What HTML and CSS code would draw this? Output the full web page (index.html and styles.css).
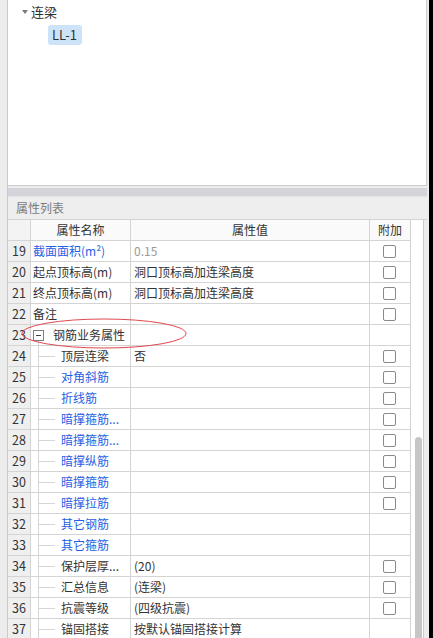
FILE: index.html
```html
<!DOCTYPE html>
<html lang="zh-CN">
<head>
<meta charset="utf-8">
<title>属性列表</title>
<link rel="stylesheet" href="styles.css">
</head>
<body>
<div class="frame">
  <div class="main">
    <div class="tree-panel">
      <div class="tree-row">
        <svg class="caret" width="6" height="4" viewBox="0 0 6 4"><path d="M0 0H6L3 4Z" fill="#7a7a7a"/></svg>
        <span class="tree-label">连梁</span>
      </div>
      <div class="tree-item"><span class="sel">LL-1</span></div>
    </div>
    <div class="props">
      <div class="splitter"></div>
      <div class="props-title">属性列表</div>
      <div class="tbl">
        <div class="grid">
          <div class="row head">
            <div class="c num"></div>
            <div class="c name center">属性名称</div>
            <div class="c val center">属性值</div>
            <div class="c add center">附加</div>
          </div>
          <div class="row"><div class="c num">19</div><div class="c name blue">截面面积(m²)</div><div class="c val gray">0.15</div><div class="c add"><span class="cb"></span></div></div>
          <div class="row"><div class="c num">20</div><div class="c name">起点顶标高(m)</div><div class="c val">洞口顶标高加连梁高度</div><div class="c add"><span class="cb"></span></div></div>
          <div class="row"><div class="c num">21</div><div class="c name">终点顶标高(m)</div><div class="c val">洞口顶标高加连梁高度</div><div class="c add"><span class="cb"></span></div></div>
          <div class="row"><div class="c num">22</div><div class="c name">备注</div><div class="c val"></div><div class="c add"><span class="cb"></span></div></div>
          <div class="row"><div class="c num">23</div><div class="c name group"><span class="minus"></span><span>钢筋业务属性</span></div><div class="c val"></div><div class="c add"></div></div>
          <div class="row"><div class="c num">24</div><div class="c name child">顶层连梁</div><div class="c val">否</div><div class="c add"><span class="cb"></span></div></div>
          <div class="row"><div class="c num">25</div><div class="c name child blue">对角斜筋</div><div class="c val"></div><div class="c add"><span class="cb"></span></div></div>
          <div class="row"><div class="c num">26</div><div class="c name child blue">折线筋</div><div class="c val"></div><div class="c add"><span class="cb"></span></div></div>
          <div class="row"><div class="c num">27</div><div class="c name child blue">暗撑箍筋...</div><div class="c val"></div><div class="c add"><span class="cb"></span></div></div>
          <div class="row"><div class="c num">28</div><div class="c name child blue">暗撑箍筋...</div><div class="c val"></div><div class="c add"><span class="cb"></span></div></div>
          <div class="row"><div class="c num">29</div><div class="c name child blue">暗撑纵筋</div><div class="c val"></div><div class="c add"><span class="cb"></span></div></div>
          <div class="row"><div class="c num">30</div><div class="c name child blue">暗撑箍筋</div><div class="c val"></div><div class="c add"><span class="cb"></span></div></div>
          <div class="row"><div class="c num">31</div><div class="c name child blue">暗撑拉筋</div><div class="c val"></div><div class="c add"><span class="cb"></span></div></div>
          <div class="row"><div class="c num">32</div><div class="c name child blue">其它钢筋</div><div class="c val"></div><div class="c add"></div></div>
          <div class="row"><div class="c num">33</div><div class="c name child blue">其它箍筋</div><div class="c val"></div><div class="c add"></div></div>
          <div class="row"><div class="c num">34</div><div class="c name child">保护层厚...</div><div class="c val">(20)</div><div class="c add"><span class="cb"></span></div></div>
          <div class="row"><div class="c num">35</div><div class="c name child">汇总信息</div><div class="c val">(连梁)</div><div class="c add"><span class="cb"></span></div></div>
          <div class="row"><div class="c num">36</div><div class="c name child">抗震等级</div><div class="c val">(四级抗震)</div><div class="c add"><span class="cb"></span></div></div>
          <div class="row"><div class="c num">37</div><div class="c name child">锚固搭接</div><div class="c val">按默认锚固搭接计算</div><div class="c add"></div></div>
        </div>
        <div class="vscroll"><div class="thumb"></div></div>
      </div>
    </div>
  </div>
  <div class="edge"></div>
</div>
<svg class="mark" width="168" height="34" viewBox="0 0 168 34"><ellipse cx="84" cy="16.5" rx="82" ry="14.5" fill="none" stroke="#e0484e" stroke-width="1"/></svg>
</body>
</html>
```
FILE: styles.css
```css
html, body {
  margin: 0;
  padding: 0;
}
body {
  width: 433px;
  height: 638px;
  overflow: hidden;
  background: #ececec;
  font-family: "Noto Sans CJK SC", "Noto Sans", sans-serif;
  font-size: 12px;
  color: #333;
  position: relative;
}
.frame {
  display: flex;
  height: 638px;
  overflow: hidden;
}
.main {
  margin-left: 7px;
  width: 420px;
  display: flex;
  flex-direction: column;
  min-height: 0;
  overflow: hidden;
}
.edge {
  margin-left: 2px;
  width: 4px;
  background: #000;
}
.tree-panel {
  height: 185px;
  flex: none;
  background: #fff;
  border: 1px solid #cbcbcb;
  border-top: none;
  box-sizing: content-box;
}
.tree-row {
  display: flex;
  align-items: center;
  height: 18px;
  margin-top: 3px;
  padding-left: 14px;
  font-size: 13px;
}
.caret {
  margin-right: 3px;
}
.tree-label {
  line-height: 18px;
}
.tree-item {
  margin-top: 4px;
  padding-left: 40px;
  font-size: 13px;
}
.sel {
  display: inline-block;
  height: 20px;
  line-height: 20px;
  padding: 0 5px 0 4px;
  background: #cce3f8;
  border-radius: 3px;
}
.props {
  flex: 1;
  display: flex;
  flex-direction: column;
  border-left: 1px solid #cbcbcb;
  min-height: 0;
  overflow: hidden;
}
.splitter {
  flex: none;
  margin-top: 2px;
  height: 8px;
  background: #d4d5da;
}
.props-title {
  flex: none;
  height: 22px;
  line-height: 22px;
  border-top: 1px solid #e4e4e4;
  border-bottom: 1px solid #d2d2d2;
  padding-left: 8px;
  color: #7c7c7c;
  background: #eeeeee;
}
.tbl {
  flex: 1;
  display: flex;
  min-height: 0;
  overflow: hidden;
}
.grid {
  width: 403px;
  background: #fff;
  overflow: hidden;
}
.row {
  display: flex;
  height: 21px;
}
.c {
  height: 20px;
  line-height: 20px;
  border-right: 1px solid #d4d4d4;
  border-bottom: 1px solid #d4d4d4;
  white-space: nowrap;
  overflow: hidden;
  box-sizing: content-box;
}
.num {
  width: 22px;
  text-align: center;
  background: #efefef;
  font-size: 12.5px;
}
.name {
  width: 97px;
  padding-left: 2px;
}
.val {
  width: 235px;
  padding-left: 3px;
}
.add {
  width: 40px;
  display: flex;
  align-items: center;
  justify-content: center;
}
.head .c {
  background: #fafafa;
}
.head .num {
  background: #f3f3f3;
}
.center {
  text-align: center;
  padding-left: 0;
}
.name.center {
  width: 99px;
}
.val.center {
  width: 238px;
}
.blue {
  color: #1f5fe3;
}
.gray {
  color: #9a9a9a;
}
.cb {
  width: 11px;
  height: 11px;
  border: 1px solid #8a8a8a;
  border-radius: 2px;
  background: #fff;
  margin-left: -1px;
}
.group {
  display: flex;
  align-items: center;
  background: linear-gradient(#d6d6d6, #d6d6d6) 7px 100% / 1px 5px no-repeat;
}
.minus {
  width: 9px;
  height: 9px;
  border: 1px solid #7e7e7e;
  margin-right: 9px;
  background: linear-gradient(#444, #444) center / 5px 1px no-repeat;
}
.child {
  width: 69px;
  padding-left: 30px;
  background:
    linear-gradient(#d6d6d6, #d6d6d6) 7px 0 / 1px 100% no-repeat,
    linear-gradient(#d6d6d6, #d6d6d6) 8px 50% / 16px 1px no-repeat;
}
.vscroll {
  width: 12px;
  background: #fff;
  border-right: 1px solid #cbcbcb;
  padding-top: 217px;
  box-sizing: content-box;
  overflow: hidden;
}
.thumb {
  margin-left: 4px;
  width: 7px;
  height: 260px;
  background: #c6c6c6;
  border-radius: 4px 4px 0 0;
}
.mark {
  position: absolute;
  left: 20px;
  top: 317px;
}
```
